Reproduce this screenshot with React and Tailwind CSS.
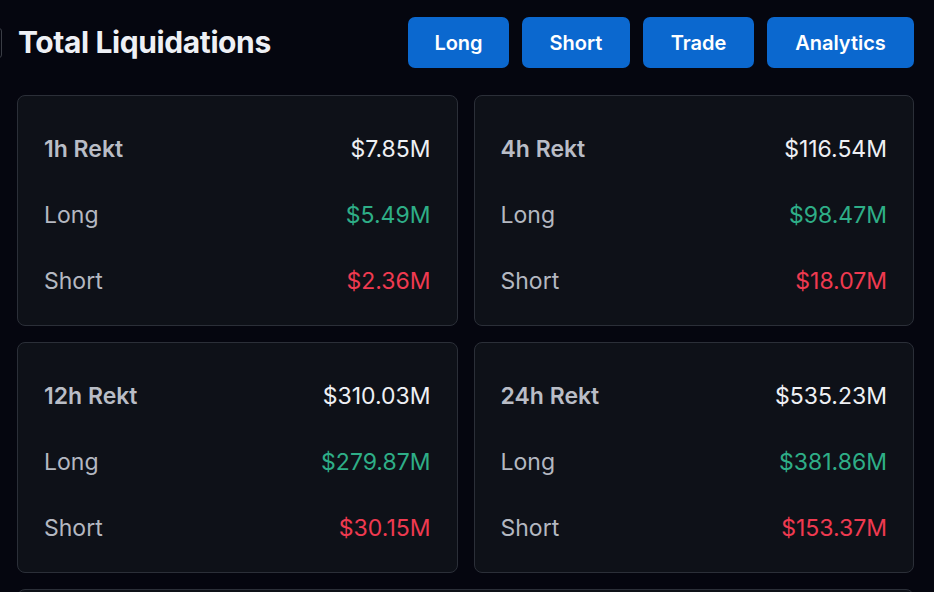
import React from "react";

const cards = [
  { t: "1h Rekt", total: "$7.85M", long: "$5.49M", short: "$2.36M" },
  { t: "4h Rekt", total: "$116.54M", long: "$98.47M", short: "$18.07M" },
  { t: "12h Rekt", total: "$310.03M", long: "$279.87M", short: "$30.15M" },
  { t: "24h Rekt", total: "$535.23M", long: "$381.86M", short: "$153.37M" },
];

function Card({ c }) {
  return (
    <div className="h-[231px] rounded-[8px] border border-[#2b2f38] bg-[#0e1118] px-[26px] pt-[20px] text-[23px]">
      <div className="flex h-[66px] items-center justify-between">
        <span className="font-semibold text-[#b9bdc6]">{c.t}</span>
        <span className="text-[#eef0f4]">{c.total}</span>
      </div>
      <div className="flex h-[66px] items-center justify-between">
        <span className="text-[#b4b8c1]">Long</span>
        <span className="text-[#2eae87]">{c.long}</span>
      </div>
      <div className="flex h-[66px] items-center justify-between">
        <span className="text-[#b4b8c1]">Short</span>
        <span className="text-[#ef3a50]">{c.short}</span>
      </div>
    </div>
  );
}

export default function App() {
  return (
    <div
      className="relative h-[592px] w-[934px] overflow-hidden bg-[#05060f]"
      style={{ fontFamily: "Inter, 'Noto Sans', sans-serif" }}
    >
      <div className="absolute left-[-6px] top-[28px] h-[30px] w-[8px] rounded-[3px] border border-[#3a3d45]" />
      <div className="flex items-center justify-between pl-[18px] pr-[20px] pt-[17px]">
        <h1 className="text-[30px] font-bold tracking-[-0.4px] text-[#eef0f5]">Total Liquidations</h1>
        <div className="flex gap-[13px]">
          {["Long", "Short", "Trade", "Analytics"].map((b, i) => (
            <button
              key={b}
              className={`h-[51px] rounded-[7px] bg-[#0b68cf] text-[20px] font-semibold text-white ${
                ["w-[101px]", "w-[108px]", "w-[111px]", "w-[147px]"][i]
              }`}
            >
              {b}
            </button>
          ))}
        </div>
      </div>
      <div className="mt-[27px] grid grid-cols-2 gap-x-[16px] gap-y-[16px] pl-[17px] pr-[20px]">
        {cards.map((c) => (
          <Card key={c.t} c={c} />
        ))}
        <div className="col-span-2 h-[40px] rounded-[8px] border border-[#2b2f38] bg-[#0e1118]" />
      </div>
    </div>
  );
}
